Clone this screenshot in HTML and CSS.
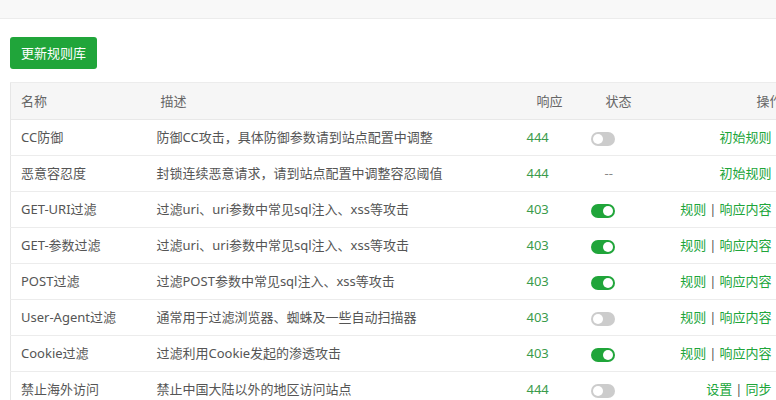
FILE: index.html
```html
<!DOCTYPE html>
<html>
<head>
<meta charset="utf-8">
<link rel="stylesheet" href="styles.css">
</head>
<body>
<div class="topband"></div>
<div class="content">
  <button class="btn">更新规则库</button>
  <table class="rules">
    <colgroup>
      <col class="c1"><col class="c2"><col class="c3"><col class="c4"><col class="c5">
    </colgroup>
    <thead>
      <tr>
        <th class="h-name">名称</th>
        <th class="h-desc">描述</th>
        <th class="h-resp">响应</th>
        <th class="h-state">状态</th>
        <th class="h-op">操作</th>
      </tr>
    </thead>
    <tbody>
      <tr><td>CC防御</td><td>防御CC攻击，具体防御参数请到站点配置中调整</td><td class="resp">444</td><td class="state"><span class="sw"></span></td><td class="op"><a>初始规则</a></td></tr>
      <tr><td>恶意容忍度</td><td>封锁连续恶意请求，请到站点配置中调整容忍阈值</td><td class="resp">444</td><td class="state"><span class="dash">--</span></td><td class="op"><a>初始规则</a></td></tr>
      <tr><td>GET-URI过滤</td><td>过滤uri、uri参数中常见sql注入、xss等攻击</td><td class="resp">403</td><td class="state"><span class="sw on"></span></td><td class="op"><a>规则</a><span class="sep">|</span><a>响应内容</a></td></tr>
      <tr><td>GET-参数过滤</td><td>过滤uri、uri参数中常见sql注入、xss等攻击</td><td class="resp">403</td><td class="state"><span class="sw on"></span></td><td class="op"><a>规则</a><span class="sep">|</span><a>响应内容</a></td></tr>
      <tr><td>POST过滤</td><td>过滤POST参数中常见sql注入、xss等攻击</td><td class="resp">403</td><td class="state"><span class="sw on"></span></td><td class="op"><a>规则</a><span class="sep">|</span><a>响应内容</a></td></tr>
      <tr><td>User-Agent过滤</td><td>通常用于过滤浏览器、蜘蛛及一些自动扫描器</td><td class="resp">403</td><td class="state"><span class="sw"></span></td><td class="op"><a>规则</a><span class="sep">|</span><a>响应内容</a></td></tr>
      <tr><td>Cookie过滤</td><td>过滤利用Cookie发起的渗透攻击</td><td class="resp">403</td><td class="state"><span class="sw on"></span></td><td class="op"><a>规则</a><span class="sep">|</span><a>响应内容</a></td></tr>
      <tr><td>禁止海外访问</td><td>禁止中国大陆以外的地区访问站点</td><td class="resp">444</td><td class="state"><span class="sw"></span></td><td class="op"><a>设置</a><span class="sep">|</span><a>同步</a></td></tr>
    </tbody>
  </table>
</div>
</body>
</html>
```
FILE: styles.css
```css
html, body {
  margin: 0;
  padding: 0;
  background: #fff;
  overflow: hidden;
  width: 776px;
  height: 400px;
}
body {
  font-family: "Noto Sans", "Noto Sans CJK SC", sans-serif;
  font-size: 13px;
  color: #555;
}
.topband {
  height: 18px;
  background: #f8f8f8;
  border-bottom: 1px solid #ececec;
}
.content {
  padding: 18px 0 0 10px;
}
.btn {
  display: block;
  height: 32px;
  width: 87px;
  padding: 0;
  border: 0;
  border-radius: 3px;
  background: #20a53a;
  color: #fff;
  font-family: "Noto Sans CJK SC", sans-serif;
  font-size: 13px;
  line-height: 32px;
  text-align: center;
}
.rules {
  margin-top: 13px;
  width: 780px;
  table-layout: fixed;
  border-collapse: collapse;
  border-left: 1px solid #e6e6e6;
}
.c1 { width: 136px; }
.c2 { width: 360px; }
.c3 { width: 74px; }
.c4 { width: 90px; }
.c5 { width: 120px; }
.rules th {
  height: 36px;
  background: #f6f6f6;
  font-weight: normal;
  color: #666;
  text-align: left;
  padding: 0;
  border-top: 1px solid #ececec;
  border-bottom: 1px solid #e8e8e8;
  line-height: 19px;
}
.rules td {
  height: 35px;
  padding: 0;
  border-bottom: 1px solid #ececec;
  line-height: 19px;
  white-space: nowrap;
}
.rules td:first-child, .rules th:first-child { padding-left: 10px; }
.rules td:nth-child(2) { padding-left: 10px; }
.h-desc { padding-left: 14px !important; }
.h-resp { padding-left: 30px !important; }
.resp { padding-left: 20px !important; color: #3a9b4b; }
.h-state { padding-left: 25px !important; }
.state { padding-left: 10px !important; }
.h-op { text-align: right !important; padding-right: 8px !important; }
.op { text-align: right; padding-right: 19px !important; }
.op a { color: #20a53a; }
.sep { color: #555; margin: 0 3px; }
.dash { padding-left: 14px; color: #888; }
.sw {
  display: inline-block;
  vertical-align: middle;
  position: relative;
  width: 24px;
  height: 14px;
  border-radius: 7px;
  background: #ccc;
}
.sw::after {
  content: "";
  position: absolute;
  top: 2px;
  left: 2px;
  width: 10px;
  height: 10px;
  border-radius: 50%;
  background: #fff;
}
.sw.on { background: #20a53a; }
.sw.on::after { left: 12px; }
```
